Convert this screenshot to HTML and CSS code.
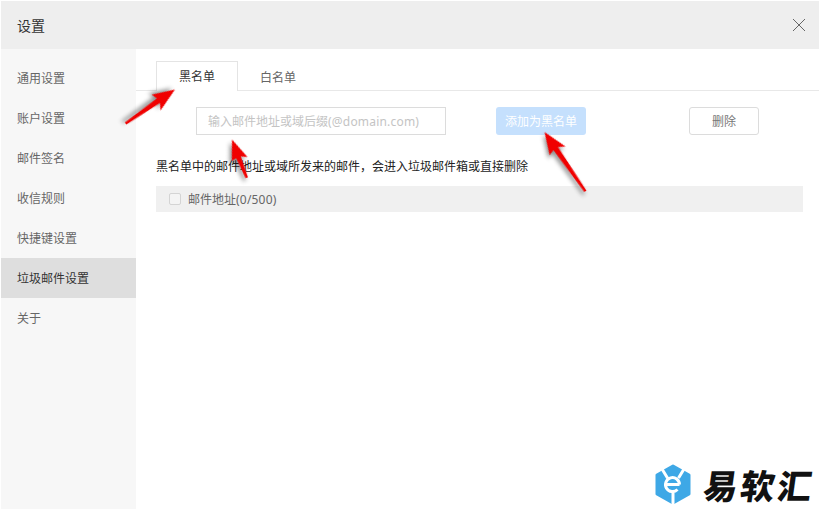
FILE: index.html
```html
<!DOCTYPE html>
<html lang="zh-CN">
<head>
  <meta charset="UTF-8" />
  <title>设置</title>
  <link rel="stylesheet" href="styles.css">
</head>
<body>
  <main class="window">
    <header class="titlebar">
      <span class="title">设置</span>
      <svg class="close" width="14" height="14" viewBox="0 0 14 14"><path d="M1 1l12 12M13 1L1 13" /></svg>
    </header>
    <div class="content">
      <nav class="sidebar">
        <a class="nav-item">通用设置</a>
        <a class="nav-item">账户设置</a>
        <a class="nav-item">邮件签名</a>
        <a class="nav-item">收信规则</a>
        <a class="nav-item">快捷键设置</a>
        <a class="nav-item active">垃圾邮件设置</a>
        <a class="nav-item">关于</a>
      </nav>
      <section class="panel">
        <div class="tabs">
          <div class="tab active">黑名单</div>
          <div class="tab">白名单</div>
        </div>
        <div class="toolbar">
          <div class="email-input">输入邮件地址或域后缀<span class="latin">(@domain.com)</span></div>
          <button class="btn btn-add">添加为黑名单</button>
          <button class="btn btn-delete">删除</button>
        </div>
        <p class="hint">黑名单中的邮件地址或域所发来的邮件，会进入垃圾邮件箱或直接删除</p>
        <div class="list-head">
          <span class="checkbox"></span>
          <span>邮件地址<span class="latin">(0/500)</span></span>
        </div>
      </section>
    </div>
  </main>

  <!-- annotation arrows over the screenshot -->
  <svg class="arrows" width="820" height="510" viewBox="0 0 820 510">
    <polygon transform="translate(175 89.5) rotate(145.2)" points="0,0 24,-9 20,-2.5 60,-1 60,1.5 20,3 22,9" />
    <polygon transform="translate(232 139.5) rotate(68.5)" points="0,0 22,-8 19,-2 41,-1 41,1.5 19,3 20,8" />
    <polygon transform="translate(544.5 132) rotate(55.2)" points="0,0 24,-9 20,-2.5 72,-1 72,1.5 20,3 22,9" />
  </svg>

  <div class="watermark">
    <svg width="36" height="41" viewBox="0 0 36 41">
      <path class="hex" d="M18 2L34 11V30L18 39L2 30V11Z" />
      <path class="mark" d="M7 5L12.5 14M29 5L23.5 14M11 20.5H24.5M24.5 20.5a7 7 0 1 0-2 5M18 28V41" />
    </svg>
    <span class="brand">易软汇</span>
  </div>
</body>
</html>
```

FILE: styles.css
```css
* {
  box-sizing: border-box;
}
html, body {
  height: 100%;
}
body {
  margin: 0;
  padding: 1px;
  background: #fff;
  font-family: "Noto Sans", "Noto Sans CJK SC", sans-serif;
  font-size: 12px;
  color: #666;
}
.window {
  height: 100%;
  display: flex;
  flex-direction: column;
  background: #fff;
}
.titlebar {
  height: 48px;
  flex: none;
  background: #eee;
  display: flex;
  align-items: center;
  justify-content: space-between;
  padding: 0 13px 0 16px;
}
.title {
  font-size: 14px;
  color: #333;
}
.close path {
  stroke: #666;
  stroke-width: 1;
  fill: none;
}
.content {
  flex: 1;
  display: flex;
}
.sidebar {
  width: 135px;
  flex: none;
  background: #f7f7f7;
  padding-top: 9px;
}
.nav-item {
  display: flex;
  align-items: center;
  height: 40px;
  padding-left: 16px;
}
.nav-item.active {
  background: #dedede;
  color: #333;
}
.panel {
  flex: 1;
  padding-top: 12px;
}
.tabs {
  display: flex;
  height: 30px;
  padding-left: 20px;
  border-bottom: 1px solid #e8e8e8;
}
.tab {
  width: 82px;
  height: 30px;
  display: flex;
  align-items: center;
  justify-content: center;
  padding-top: 2px;
}
.tab + .tab {
  width: 80px;
}
.tab.active {
  background: #fff;
  color: #333;
  border: 1px solid #e4e4e4;
  border-bottom: none;
  padding-top: 0;
  padding-bottom: 2px;
}
.toolbar {
  display: flex;
  margin: 16px 0 0 60px;
}
.email-input {
  width: 250px;
  height: 28px;
  border: 1px solid #dcdcdc;
  padding-left: 11px;
  line-height: 28px;
  color: #c4c4c4;
  white-space: nowrap;
}
.latin {
  letter-spacing: 0.2px;
}
.btn {
  height: 28px;
  padding: 0;
  font: inherit;
  border-radius: 3px;
}
.btn-add {
  width: 90px;
  margin-left: 50px;
  border: none;
  background: #c5e0fd;
  color: #fff;
}
.btn-delete {
  width: 70px;
  margin-left: 103px;
  border: 1px solid #dcdcdc;
  background: #fff;
  color: #777;
}
.hint {
  margin: 23px 0 0 20px;
  line-height: 18px;
  color: #222;
}
.list-head {
  display: flex;
  align-items: center;
  height: 26px;
  margin: 10px 16px 0 20px;
  padding-left: 13px;
  background: #f0f0f0;
}
.checkbox {
  width: 12px;
  height: 12px;
  margin-right: 7px;
  background: #f4f4f4;
  border: 1px solid #d4d4d4;
  border-radius: 2px;
}
.arrows {
  position: absolute;
  left: 0;
  top: 0;
  pointer-events: none;
}
.arrows polygon {
  fill: #f00000;
  filter: drop-shadow(2px 3px 2px rgba(0, 0, 0, 0.45));
}
.watermark {
  position: absolute;
  left: 655px;
  top: 464px;
  display: flex;
  align-items: center;
  gap: 13px;
}
.hex {
  fill: #3ea8e6;
  stroke: #3ea8e6;
  stroke-width: 3;
  stroke-linejoin: round;
}
.mark {
  fill: none;
  stroke: #fff;
  stroke-width: 3;
}
.brand {
  font-family: "Noto Sans CJK SC", sans-serif;
  font-size: 34px;
  line-height: 41px;
  font-weight: 900;
  letter-spacing: 3px;
  color: #111;
  transform: skewX(-8deg);
}
```
